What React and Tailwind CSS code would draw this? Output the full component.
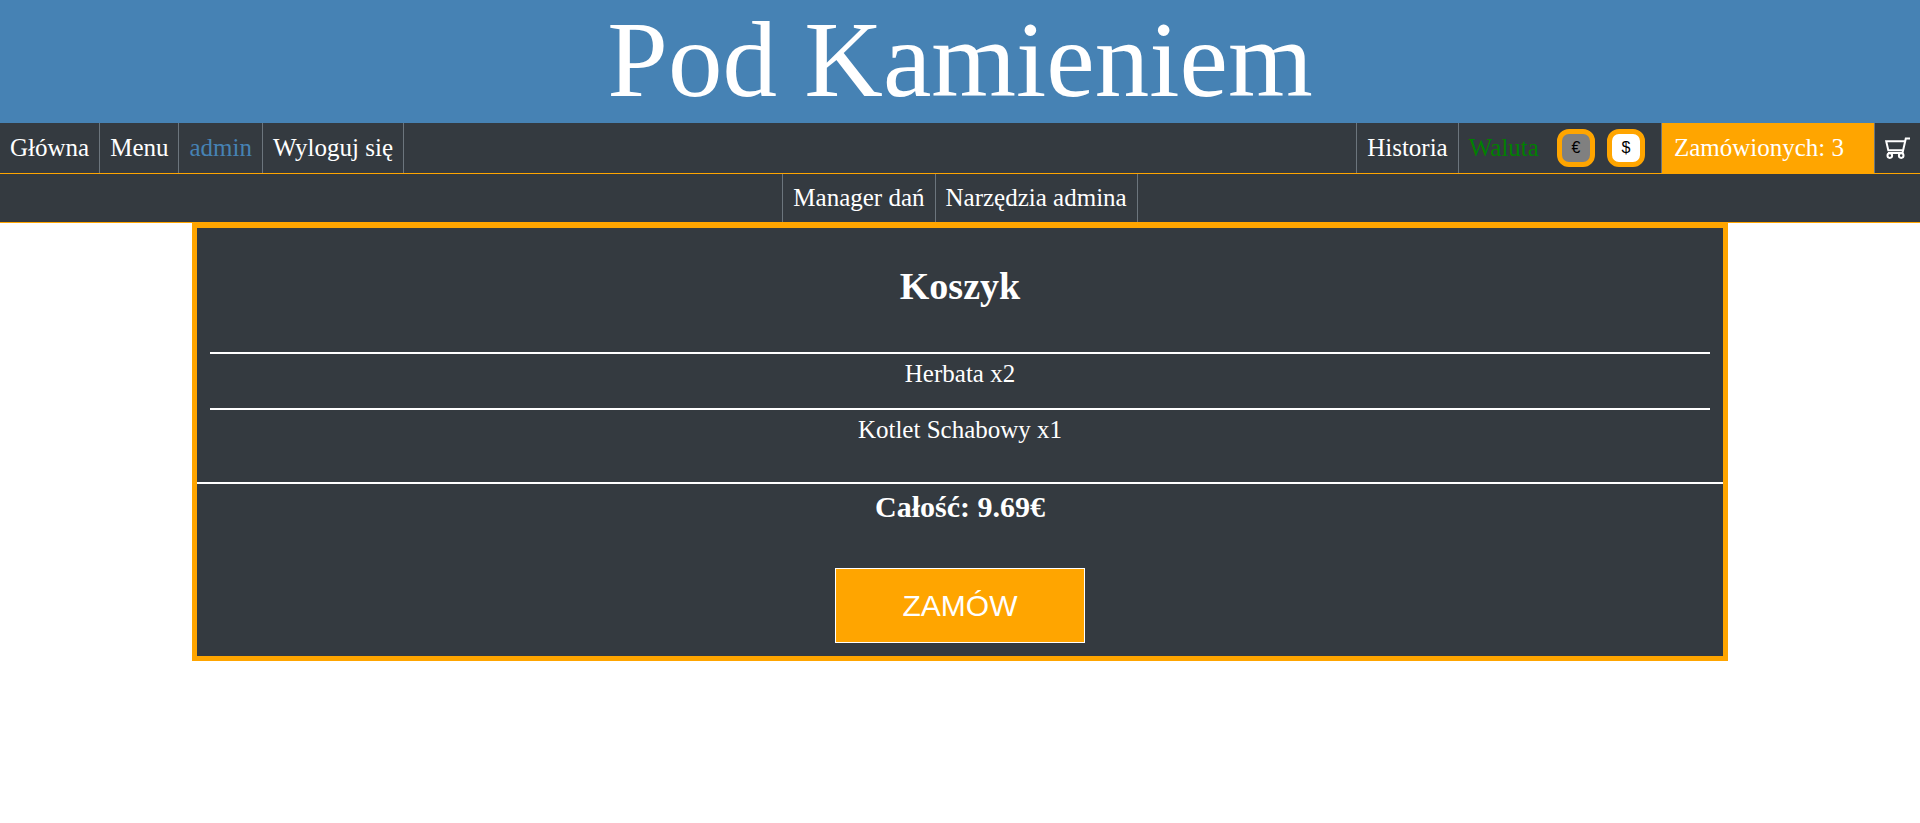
const linkBase = "flex items-center border-r border-[#6c757d] px-2.5";

function NavLink({ children, className = "text-white" }) {
  return (
    <a href="#" className={`${linkBase} ${className}`}>
      {children}
    </a>
  );
}

function CurrencyButton({ children, label, className }) {
  return (
    <button
      type="button"
      aria-label={label}
      className={`size-[38px] rounded-[12px] border-5 border-[#ffa500] font-['Liberation_Sans',Arial,sans-serif] text-base leading-none text-black ${className}`}
    >
      {children}
    </button>
  );
}

function CartIcon() {
  return (
    <svg viewBox="0 0 25 22" className="h-[22px] w-[25px]" fill="none" stroke="currentColor" strokeWidth="2" aria-hidden="true">
      <path d="M25 1.5h-4.2L17.5 16H3" />
      <path d="M20 4.2H1.2l2.1 9h14.4" />
      <circle cx="4.8" cy="18.6" r="2.3" />
      <circle cx="16.2" cy="18.6" r="2.3" />
    </svg>
  );
}

function CartItem({ children, className }) {
  return (
    <li className={`border-t-2 border-white pt-[5px] leading-[30px] ${className}`}>{children}</li>
  );
}

export default function App() {
  return (
    <div className="font-['Liberation_Serif','Times_New_Roman',serif] text-[25px] text-white">
      <header className="bg-[#4682b4] pb-1 text-center">
        <h1 className="text-[109px] leading-[119px]">Pod Kamieniem</h1>
      </header>

      <nav className="flex h-[51px] justify-between border-b border-[#ffa500] bg-[#343a40]">
        <div className="flex">
          <NavLink>Główna</NavLink>
          <NavLink>Menu</NavLink>
          <NavLink className="text-[#4682b4]">admin</NavLink>
          <NavLink>Wyloguj się</NavLink>
        </div>
        <div className="flex">
          <div className="flex border-l border-[#6c757d]">
            <NavLink>Historia</NavLink>
          </div>
          <div className="flex items-center gap-3 border-r border-[#6c757d] pr-4 pl-2.5">
            <span className="pr-1.5 text-[#008000]">Waluta</span>
            <CurrencyButton label="Euro" className="bg-[#808080]">€</CurrencyButton>
            <CurrencyButton label="Dolar" className="bg-white">$</CurrencyButton>
          </div>
          <div className="flex items-center border-r border-[#6c757d] bg-[#ffa500] pr-[30px] pl-3">
            Zamówionych: 3
          </div>
          <a href="#" aria-label="Koszyk" className="flex items-center px-2.5">
            <CartIcon />
          </a>
        </div>
      </nav>

      <nav className="flex h-[49px] justify-center border-b border-[#ffa500] bg-[#343a40]">
        <div className="flex border-l border-[#6c757d]">
          <NavLink>Manager dań</NavLink>
          <NavLink>Narzędzia admina</NavLink>
        </div>
      </nav>

      <main className="mx-auto w-4/5 border-5 border-[#ffa500] bg-[#343a40] pb-[13px] text-center">
        <h2 className="pt-9 pb-11 text-[38px] leading-[44px] font-bold">Koszyk</h2>
        <ul className="mx-[13px]">
          <CartItem className="pb-[19px]">Herbata x2</CartItem>
          <CartItem className="pb-[37px]">Kotlet Schabowy x1</CartItem>
        </ul>
        <p className="border-t-2 border-white pt-[5px] text-[30px] leading-[36px] font-bold">Całość: 9.69€</p>
        <button
          type="button"
          className="mx-auto mt-[43px] block h-[75px] w-[250px] border border-white bg-[#ffa500] font-['Liberation_Sans',Arial,sans-serif] text-[30px]"
        >
          ZAMÓW
        </button>
      </main>
    </div>
  );
}
